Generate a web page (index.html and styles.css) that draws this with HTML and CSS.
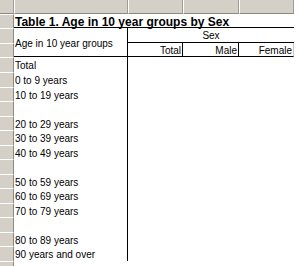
FILE: index.html
```html
<!DOCTYPE html>
<html>
<head>
<meta charset="utf-8">
<link rel="stylesheet" href="styles.css">
</head>
<body>
<div class="sheet">
  <div class="ch corner"></div>
  <div class="ch"></div>
  <div class="ch"></div>
  <div class="ch"></div>
  <div class="ch"></div>
  <div class="ch tail"></div>

  <div class="rh r1"></div>
  <div class="title">Table 1. Age in 10 year groups by Sex</div>
  <div class="blank"></div>

  <div class="rh r2"></div>
  <div class="rh r3"></div>
  <div class="stub">Age in 10 year groups</div>
  <div class="sex">Sex</div>
  <div class="blank r2c"></div>
  <div class="sub">Total</div>
  <div class="sub">Male</div>
  <div class="sub last">Female</div>
  <div class="blank r3c"></div>

  <div class="rh"></div><div class="lab">Total</div><div class="rest"></div>
  <div class="rh"></div><div class="lab">0 to 9 years</div><div class="rest"></div>
  <div class="rh"></div><div class="lab">10 to 19 years</div><div class="rest"></div>
  <div class="rh"></div><div class="lab"></div><div class="rest"></div>
  <div class="rh"></div><div class="lab">20 to 29 years</div><div class="rest"></div>
  <div class="rh"></div><div class="lab">30 to 39 years</div><div class="rest"></div>
  <div class="rh"></div><div class="lab">40 to 49 years</div><div class="rest"></div>
  <div class="rh"></div><div class="lab"></div><div class="rest"></div>
  <div class="rh"></div><div class="lab">50 to 59 years</div><div class="rest"></div>
  <div class="rh"></div><div class="lab">60 to 69 years</div><div class="rest"></div>
  <div class="rh"></div><div class="lab">70 to 79 years</div><div class="rest"></div>
  <div class="rh"></div><div class="lab"></div><div class="rest"></div>
  <div class="rh"></div><div class="lab">80 to 89 years</div><div class="rest"></div>
  <div class="rh"></div><div class="lab">90 years and over</div><div class="rest"></div>
  <div class="rh"></div><div class="lab end"></div><div class="rest"></div>
</div>
</body>
</html>
```

FILE: styles.css
```css
html, body {
  margin: 0;
  padding: 0;
  background: #ffffff;
}
body {
  width: 300px;
  height: 266px;
  overflow: hidden;
  font-family: "Liberation Sans", Arial, sans-serif;
  font-size: 10px;
  color: #000;
}
.sheet {
  display: grid;
  grid-template-columns: 14px 114px 55px 56px 55px 6px;
  grid-template-rows: 14px 14px 15px 14px 15px 15px 14px 15px 14px 15px 14px 15px 14px 15px 14px 15px 14px 15px 14px;
}
.ch {
  background: #d4d0c8;
  border-left: 1px solid #ffffff;
  border-right: 1px solid #a09c94;
  border-bottom: 1px solid #8c8880;
  box-sizing: border-box;
}
.ch.corner {
  border-left: none;
}
.ch.tail {
  background: #ffffff;
  border: none;
}
.rh {
  grid-column: 1;
  background: #d4d0c8;
  border-top: 1px solid #ffffff;
  border-right: 1px solid #8c8880;
  box-sizing: border-box;
}
.rh.r2 { grid-row: 3; }
.rh.r3 { grid-row: 4; }
.title {
  grid-column: 2 / 6;
  font-weight: bold;
  font-size: 12px;
  line-height: 12px;
  padding-top: 2px;
  padding-left: 1px;
  border-bottom: 1px solid #000;
  white-space: nowrap;
  overflow: visible;
  box-sizing: border-box;
}
.blank {
  grid-column: 6;
}
.stub {
  grid-column: 2;
  grid-row: 3 / 5;
  display: flex;
  align-items: center;
  padding-left: 1px;
  padding-top: 2px;
  border-right: 1px solid #000;
  border-bottom: 1px solid #000;
  box-sizing: border-box;
}
.sex {
  grid-column: 3 / 6;
  grid-row: 3;
  text-align: center;
  line-height: 12px;
  padding-top: 2px;
  border-bottom: 1px solid #000;
  box-sizing: border-box;
}
.r2c { grid-row: 3; }
.r3c { grid-row: 4; }
.sub {
  grid-row: 4;
  text-align: right;
  line-height: 12px;
  padding-top: 2px;
  padding-right: 1px;
  border-right: 1px solid #000;
  border-bottom: 1px solid #000;
  box-sizing: border-box;
}
.sub.last {
  border-right: 1px solid #c8c8c8;
}
.lab {
  grid-column: 2;
  line-height: 13px;
  padding-top: 2px;
  padding-left: 1px;
  border-right: 1px solid #000;
  white-space: nowrap;
  box-sizing: border-box;
}
.lab.end {
  border-right: none;
}
.rest {
  grid-column: 3 / 7;
}
```
